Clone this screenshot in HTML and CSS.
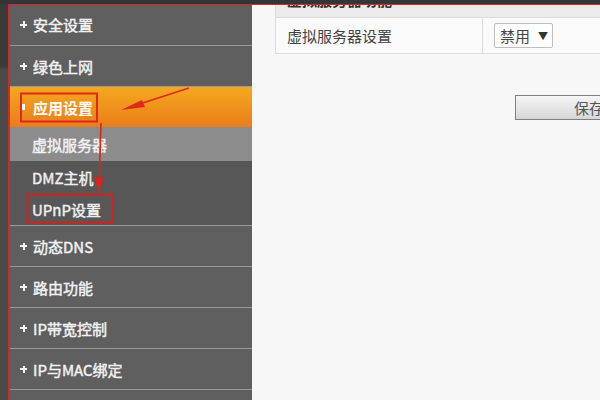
FILE: index.html
```html
<!DOCTYPE html>
<html lang="zh-CN">
<head>
<meta charset="utf-8">
<title>应用设置</title>
<link rel="stylesheet" href="styles.css">
</head>
<body>
<div class="screen">
  <div class="topbar"></div>
  <div class="row">
    <div class="leftstrip"></div>
    <div class="frame">
      <nav class="sidebar">
        <div class="item first"><span class="plus"></span>安全设置</div>
        <div class="item"><span class="plus"></span>绿色上网</div>
        <div class="item active"><span class="dot"></span>应用设置</div>
        <div class="sub sel">虚拟服务器</div>
        <div class="sub">DMZ主机</div>
        <div class="sub last">UPnP设置</div>
        <div class="item"><span class="plus"></span>动态DNS</div>
        <div class="item"><span class="plus"></span>路由功能</div>
        <div class="item"><span class="plus"></span>IP带宽控制</div>
        <div class="item"><span class="plus"></span>IP与MAC绑定</div>
        <div class="item"></div>
      </nav>
      <main class="content">
        <table class="tbl">
          <tr class="head"><td colspan="2">虚拟服务器功能</td></tr>
          <tr>
            <td class="label">虚拟服务器设置</td>
            <td class="value"><span class="select">禁用<span class="caret">▼</span></span></td>
          </tr>
        </table>
        <div class="actions"><button class="btn">保存</button></div>
      </main>
    </div>
  </div>
  <svg class="marks" width="600" height="400" viewBox="0 0 600 400">
    <rect x="21" y="93.5" width="76" height="28" fill="none" stroke="#e0281c" stroke-width="2"/>
    <rect x="27.5" y="194.5" width="85" height="28" fill="none" stroke="#d0221e" stroke-width="2"/>
    <line x1="189" y1="88" x2="138" y2="104.5" stroke="#e0281c" stroke-width="1.6"/>
    <polygon points="121,110 142,100 145,107" fill="#e0281c"/>
    <line x1="101" y1="123" x2="99.3" y2="180" stroke="#d8261e" stroke-width="1.6"/>
    <polygon points="98.5,192 94,177 104,177.5" fill="#d8261e"/>
  </svg>
</div>
</body>
</html>
```
FILE: styles.css
```css
html, body {
  margin: 0;
  padding: 0;
}
body {
  width: 600px;
  height: 400px;
  overflow: hidden;
  background: #474747;
  font-family: "Noto Sans CJK SC", "Liberation Sans", sans-serif;
}
.screen {
  position: relative;
  width: 600px;
  height: 400px;
  display: flex;
  flex-direction: column;
  overflow: hidden;
}
.topbar {
  height: 4px;
  flex: none;
  background: #353535;
}
.row {
  flex: 1;
  display: flex;
  min-height: 0;
}
.leftstrip {
  width: 8px;
  flex: none;
  background: linear-gradient(#3a3a3a 0, #3a3a3a 62px, #4a4a4a 66px, #4a4a4a 100%);
}
.frame {
  flex: 1;
  display: flex;
  border-top: 1px solid #d22a26;
  border-left: 2px solid #d22a26;
  min-width: 0;
}
.sidebar {
  width: 242px;
  flex: none;
  background: #5e5e5e;
  display: flex;
  flex-direction: column;
}
.item {
  height: 41px;
  box-sizing: border-box;
  flex: none;
  border-bottom: 1px solid #9a9a9a;
  background: #5f5f5f;
  color: #f2f2f2;
  font-size: 15px;
  font-weight: 400;
  -webkit-text-stroke: 0.45px #f2f2f2;
  display: flex;
  align-items: center;
  padding-left: 10px;
}
.item.first {
  height: 41px;
  padding-bottom: 1px;
}
.plus {
  width: 7px;
  height: 7px;
  margin-right: 6px;
  position: relative;
  flex: none;
}
.plus::before, .plus::after {
  content: "";
  position: absolute;
  background: #f4f4f4;
}
.plus::before {
  left: 0;
  top: 2.5px;
  width: 7px;
  height: 2px;
}
.plus::after {
  left: 2.5px;
  top: 0;
  width: 2px;
  height: 7px;
}
.dot {
  width: 5px;
  height: 6px;
  background: #fff;
  margin-right: 8px;
  flex: none;
}
.item.active {
  height: 40px;
  background: linear-gradient(#f4a81e, #ea7d1c);
  border-bottom: none;
  color: #fff;
  font-weight: bold;
  -webkit-text-stroke: 0;
}
.sub {
  height: 33px;
  flex: none;
  box-sizing: border-box;
  background: #575757;
  color: #f0f0f0;
  font-size: 15px;
  font-weight: 400;
  -webkit-text-stroke: 0.45px #f0f0f0;
  display: flex;
  align-items: center;
  padding-left: 22px;
}
.sub.sel {
  height: 34px;
  background: #8c8c8c;
  color: #f6f6f6;
}
.sub.last {
  height: 32px;
  border-bottom: 1px solid #9a9a9a;
}
.content {
  flex: 1;
  background: #f7f7f7;
  overflow: hidden;
  min-width: 0;
}
.tbl {
  border-collapse: collapse;
  margin-left: 23px;
  margin-top: -24px;
  width: 420px;
  font-size: 15px;
  color: #444;
}
.tbl td {
  border: 1px solid #dcdcdc;
  padding: 0 0 0 11px;
}
.tbl .head td {
  height: 35px;
  background: #ebebeb;
  color: #333;
  font-weight: bold;
}
.tbl .label {
  width: 195px;
  height: 35px;
  background: #fafafa;
}
.tbl .value {
  background: #fafafa;
}
.select {
  display: inline-flex;
  align-items: center;
  height: 25px;
  width: 59px;
  box-sizing: border-box;
  border: 1px solid #bdbdbd;
  border-radius: 2px;
  background: #fff;
  padding-left: 5px;
  font-size: 15px;
  color: #444;
}
.caret {
  font-size: 10px;
  margin-left: 8px;
  color: #333;
}
.actions {
  padding: 41px 0 0 263px;
}
.btn {
  width: 148px;
  height: 25px;
  border: 1px solid #7f7f7f;
  background: linear-gradient(#f6f6f6, #d6d6d6);
  font-family: "Noto Sans CJK SC", sans-serif;
  font-size: 15px;
  color: #555;
  padding: 0;
  border-radius: 0;
}
.marks {
  position: absolute;
  left: 0;
  top: 0;
}
```
